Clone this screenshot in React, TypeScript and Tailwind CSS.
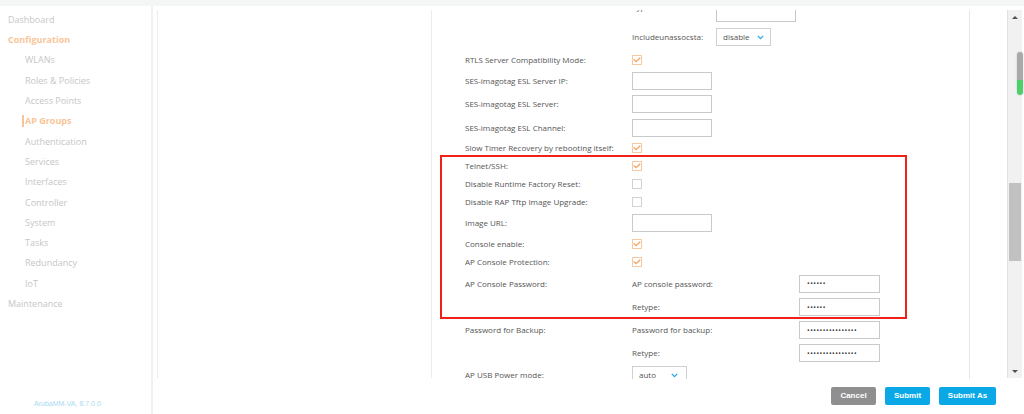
import React from "react";

const Check = ({ checked }: { checked: boolean }) =>
  checked ? (
    <div className="w-[10px] h-[10px] border border-[#f6c9a3] bg-white flex items-center justify-center">
      <svg width="8" height="6" viewBox="0 0 8 6">
        <path d="M0.7 2.4 L3 4.7 L7.3 0.7" stroke="#f2a25c" strokeWidth="1.3" fill="none" />
      </svg>
    </div>
  ) : (
    <div className="w-[10px] h-[10px] border border-[#d2d2d2] bg-white" />
  );

const Input = ({ value = "", w = "w-[81px]" }: { value?: string; w?: string }) => (
  <div className={`${w} h-[18px] border border-[#c9c9c9] bg-white flex items-center pl-[7px] text-[7px] tracking-[0.5px] text-[#333] leading-none`}>
    {value}
  </div>
);

const Chevron = () => (
  <svg width="7" height="5" viewBox="0 0 7 5">
    <path d="M0.8 0.9 L3.5 3.6 L6.2 0.9" stroke="#27a8e0" strokeWidth="1.3" fill="none" />
  </svg>
);

function Row({
  label,
  h,
  boxed,
  children,
}: {
  label: string;
  h: string;
  boxed?: boolean;
  children?: React.ReactNode;
}) {
  return (
    <div className={`flex items-center ${h} ${boxed ? "pl-[23px]" : "pl-[33px]"}`}>
      <div className="w-[167px] shrink-0 whitespace-nowrap">{label}</div>
      <div className="flex items-center">{children}</div>
    </div>
  );
}

function PwdRow({
  label,
  sub,
  value,
  boxed,
  h1,
}: {
  label: string;
  sub: string;
  value: string;
  boxed?: boolean;
  h1: string;
}) {
  return (
    <div className={`flex items-start ${boxed ? "pl-[23px]" : "pl-[33px]"}`}>
      <div className={`w-[167px] shrink-0 flex items-center whitespace-nowrap ${h1}`}>{label}</div>
      <div className="flex flex-col">
        <div className={`flex items-center ${h1}`}>
          <div className="w-[167px] shrink-0 whitespace-nowrap">{sub}</div>
          <Input value={value} />
        </div>
        <div className="flex items-center h-[20px]">
          <div className="w-[167px] shrink-0">Retype:</div>
          <Input value={value} />
        </div>
      </div>
    </div>
  );
}

const navItems = [
  { t: "WLANs" },
  { t: "Roles & Policies" },
  { t: "Access Points" },
  { t: "AP Groups", active: true },
  { t: "Authentication" },
  { t: "Services" },
  { t: "Interfaces" },
  { t: "Controller" },
  { t: "System" },
  { t: "Tasks" },
  { t: "Redundancy" },
  { t: "IoT" },
];

export default function App() {
  return (
    <div className="w-[1024px] h-[414px] overflow-hidden bg-white flex flex-col relative font-['Open_Sans',sans-serif]">
      <div className="h-[6px] bg-[#f4f6f6] shrink-0" />
      <div className="flex flex-1 min-h-0">
        {/* Sidebar */}
        <div className="w-[153px] shrink-0 border-r-2 border-[#f1f1f1] flex flex-col pt-[3.5px] text-[9px] text-[#c6c6c6]">
          <div className="h-[20.3px] flex items-center pl-[8px]">Dashboard</div>
          <div className="h-[20.3px] flex items-center pl-[8px] font-bold text-[#f9c597]">Configuration</div>
          {navItems.map((n) =>
            n.active ? (
              <div key={n.t} className="h-[20.3px] flex items-center pl-[22px] font-bold text-[#f9c597]">
                <div className="w-[2px] h-[12px] bg-[#f9c597] mr-[1px]" />
                {n.t}
              </div>
            ) : (
              <div key={n.t} className="h-[20.3px] flex items-center pl-[25px]">
                {n.t}
              </div>
            )
          )}
          <div className="h-[20.3px] flex items-center pl-[8px]">Maintenance</div>
          <div className="mt-auto pl-[34px] pb-[5px] text-[7px] text-[#a9d9f2] font-['Liberation_Sans',sans-serif]">
            ArubaMM-VA, 8.7.0.0
          </div>
        </div>

        {/* Main */}
        <div className="flex-1 flex flex-col min-w-0">
          <div className="flex pt-[4px] pl-[4px] h-[373px]">
            <div className="w-[275px] h-[368px] border-l border-r border-[#ececec] shrink-0" />
            <div className="w-[538px] h-[369px] border-r border-[#e6e6e6] overflow-hidden shrink-0 text-[8px] text-[#555]">
              <div className="mt-[-9px]">
                <div className="flex items-start h-[24px] pl-[200px]">
                  <div className="w-[84px] shrink-0 leading-[11px] mt-[0px]">Type:</div>
                  <div className="mt-[3px]">
                    <Input w="w-[80px]" />
                  </div>
                </div>
                <div className="flex items-center h-[24px] pl-[200px]">
                  <div className="w-[84px] shrink-0">Includeunassocsta:</div>
                  <div className="w-[55px] h-[18px] border border-[#d0d0d0] flex items-center justify-between pl-[6px] pr-[6px]">
                    <span>disable</span>
                    <Chevron />
                  </div>
                </div>
                <Row label="RTLS Server Compatibility Mode:" h="h-[21px]">
                  <Check checked />
                </Row>
                <Row label="SES-imagotag ESL Server IP:" h="h-[21px]">
                  <Input w="w-[80px]" />
                </Row>
                <Row label="SES-imagotag ESL Server:" h="h-[26px]">
                  <Input w="w-[80px]" />
                </Row>
                <Row label="SES-imagotag ESL Channel:" h="h-[21px]">
                  <Input w="w-[80px]" />
                </Row>
                <Row label="Slow Timer Recovery by rebooting itself:" h="h-[19px]">
                  <Check checked />
                </Row>
                <div className="ml-[8px] w-[467px] border-2 border-[#f0201a] my-[-2px]">
                  <Row boxed label="Telnet/SSH:" h="h-[18px]">
                    <Check checked />
                  </Row>
                  <Row boxed label="Disable Runtime Factory Reset:" h="h-[18px]">
                    <Check checked={false} />
                  </Row>
                  <Row boxed label="Disable RAP Tftp Image Upgrade:" h="h-[18px]">
                    <Check checked={false} />
                  </Row>
                  <Row boxed label="Image URL:" h="h-[23px]">
                    <Input w="w-[80px]" />
                  </Row>
                  <Row boxed label="Console enable:" h="h-[20px]">
                    <Check checked />
                  </Row>
                  <Row boxed label="AP Console Protection:" h="h-[16px]">
                    <Check checked />
                  </Row>
                  <PwdRow boxed label="AP Console Password:" sub="AP console password:" value="••••••" h1="h-[27px]" />
                </div>
                <PwdRow label="Password for Backup:" sub="Password for backup:" value="••••••••••••••••" h1="h-[26px]" />
                <Row label="AP USB Power mode:" h="h-[24px]">
                  <div className="w-[55px] h-[18px] border border-[#d0d0d0] flex items-center justify-between pl-[6px] pr-[8px]">
                    <span>auto</span>
                    <Chevron />
                  </div>
                </Row>
              </div>
            </div>
            <div className="w-[37px] shrink-0" />
            {/* Scrollbar */}
            <div className="w-[15px] h-[368px] bg-[#f1f1f1] border-l border-[#e2e2e2] flex flex-col items-center shrink-0">
              <div className="h-[14px] flex items-center justify-center">
                <div className="w-0 h-0 border-l-[3px] border-r-[3px] border-b-[3px] border-l-transparent border-r-transparent border-b-[#505050]" />
              </div>
              <div className="h-[159px]" />
              <div className="w-[12px] h-[78px] bg-[#c1c1c1]" />
              <div className="flex-1" />
              <div className="h-[14px] flex items-center justify-center">
                <div className="w-0 h-0 border-l-[3px] border-r-[3px] border-t-[3px] border-l-transparent border-r-transparent border-t-[#505050]" />
              </div>
            </div>
          </div>
          {/* Bottom bar */}
          <div className="flex justify-end items-start pt-[8px] pr-[28px] gap-[9px] font-['Liberation_Sans',sans-serif] text-[8px] font-bold text-white">
            <div className="w-[45px] h-[18px] rounded-[2px] bg-[#8f8f8f] flex items-center justify-center">Cancel</div>
            <div className="w-[45px] h-[18px] rounded-[2px] bg-[#0aa8e6] flex items-center justify-center">Submit</div>
            <div className="w-[57px] h-[18px] rounded-[2px] bg-[#0aa8e6] flex items-center justify-center">Submit As</div>
          </div>
        </div>
      </div>
      {/* floating capsule widget */}
      <div className="absolute left-[1017px] top-[52px] w-[6px] h-[43px] rounded-[3px] overflow-hidden flex flex-col shadow-[0_0_2px_rgba(0,0,0,0.2)]">
        <div className="h-[28px] bg-[#a9a9a9]" />
        <div className="flex-1 bg-[#4cd06c]" />
      </div>
    </div>
  );
}
